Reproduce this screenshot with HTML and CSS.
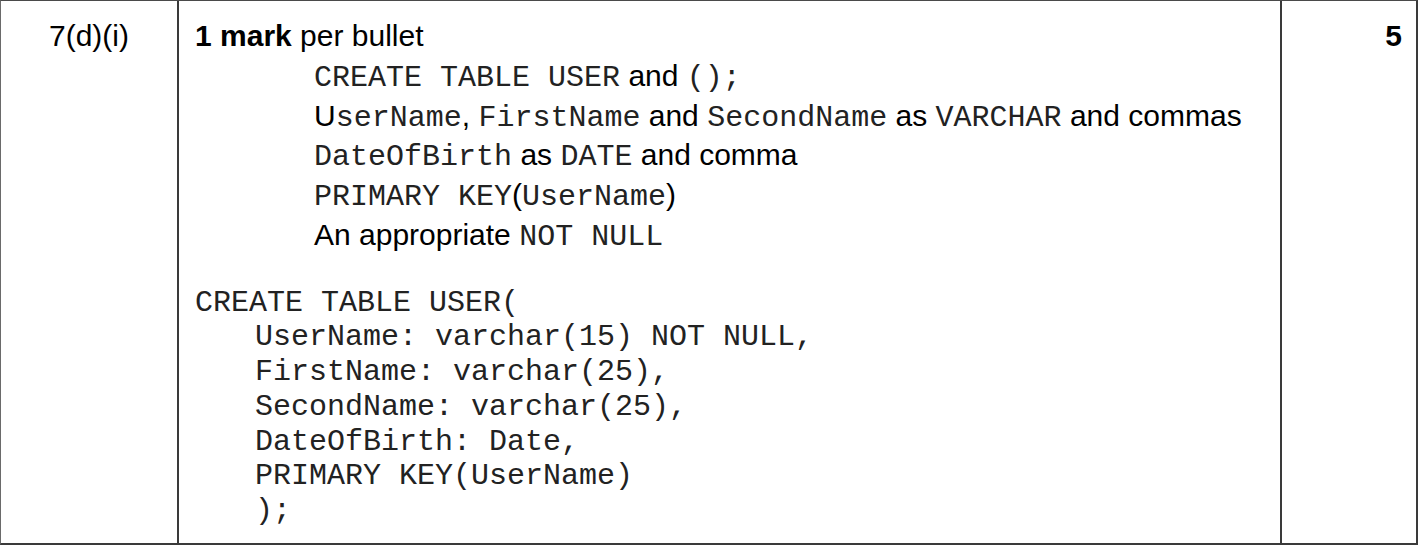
FILE: index.html
```html
<!DOCTYPE html>
<html>
<head>
<meta charset="utf-8">
<link rel="stylesheet" href="styles.css">
</head>
<body>
<div class="row">
  <div class="cell q">7(d)(i)</div>
  <div class="cell answer">
    <div class="line"><b>1 mark</b> per bullet</div>
    <div class="bullets">
      <div class="line"><code>CREATE TABLE USER</code> and <code>();</code></div>
      <div class="line">U<code>serName</code>, <code>FirstName</code> and <code>SecondName</code> as <code>VARCHAR</code> and commas</div>
      <div class="line"><code>DateOfBirth</code> as <code>DATE</code> and comma</div>
      <div class="line"><code>PRIMARY KEY</code>(<code>UserName</code>)</div>
      <div class="line">An appropriate <code>NOT NULL</code></div>
    </div>
<pre class="code">CREATE TABLE USER(
<span class="ind">UserName: varchar(15) NOT NULL,</span>
<span class="ind">FirstName: varchar(25),</span>
<span class="ind">SecondName: varchar(25),</span>
<span class="ind">DateOfBirth: Date,</span>
<span class="ind">PRIMARY KEY(UserName)</span>
<span class="ind">);</span></pre>
  </div>
  <div class="cell marks">5</div>
</div>
</body>
</html>
```

FILE: styles.css
```css
html, body {
  margin: 0;
  padding: 0;
  background: #fff;
}
body {
  font-family: "Liberation Sans", Arial, sans-serif;
  font-size: 30px;
  color: #000;
}
.row {
  box-sizing: border-box;
  width: 1418px;
  height: 545px;
  display: grid;
  grid-template-columns: 176px 1103px 1fr;
  border-top: 1px solid #4a4a4a;
  border-left: 1px solid #6a6a6a;
  border-right: 2px solid #3a3a3a;
  border-bottom: 2px solid #3a3a3a;
}
.cell {
  box-sizing: border-box;
  padding-top: 15px;
  line-height: 39.8px;
}
.cell + .cell {
  border-left: 2px solid #3a3a3a;
}
.q {
  text-align: center;
}
.answer {
  padding-left: 16px;
}
.marks {
  text-align: right;
  font-weight: bold;
  padding-right: 14px;
}
.bullets {
  padding-left: 119px;
}
code, .code {
  font-family: "Liberation Mono", "Courier New", monospace;
  font-size: 30px;
  color: #222;
}
code {
  line-height: 1;
}
.code {
  margin: 31px 0 0 0;
  line-height: 34.7px;
  white-space: pre;
}
.ind {
  display: inline-block;
  padding-left: 60px;
}
```
